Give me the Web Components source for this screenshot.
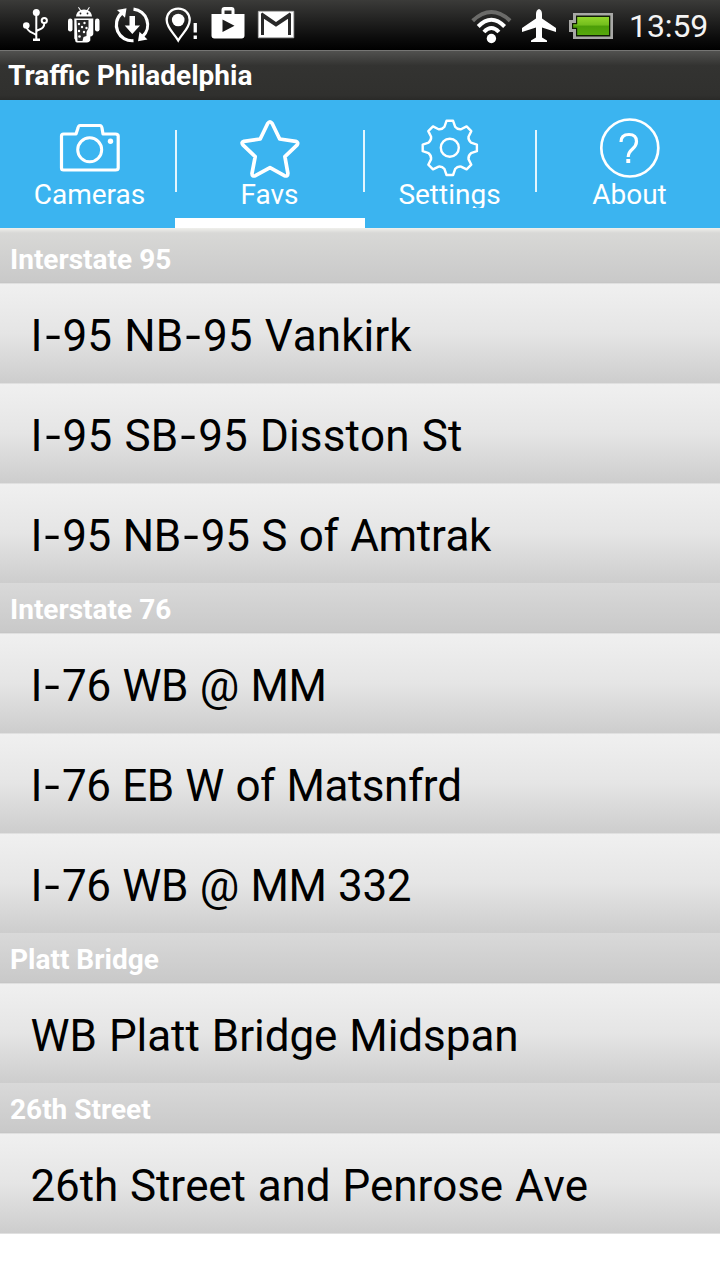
<!DOCTYPE html>
<html lang="en">
<head>
<meta charset="utf-8">
<title>Traffic Philadelphia</title>
<style>
html,body{margin:0;padding:0;background:#fff}
body{width:720px;height:1280px;overflow:hidden;font-family:Roboto,"Noto Sans",sans-serif}
</style>
</head>
<body>
<traffic-app></traffic-app>
<script>
const define = (name, html, after) => customElements.define(name, class extends HTMLElement {
  connectedCallback() {
    if (this.shadowRoot) return;
    const t = document.createElement('template');
    t.innerHTML = html;
    const root = this.attachShadow({mode: 'open'});
    root.append(t.content.cloneNode(true));
    if (after) after(this, root);
  }
});

define('status-bar', `
<style>
:host{display:flex;height:50px;box-sizing:border-box;background:linear-gradient(#3b3b39,#252524 35%,#0c0c0c 75%,#000);color:#f4f4f4}
svg{display:block;flex:none}
.left{width:460px}
span{font-size:32px;line-height:53px;letter-spacing:-.1px;margin-left:9px;white-space:nowrap}
</style>
<svg class="left" width="460" height="50" viewBox="0 0 460 50">
  <g fill="none" stroke="#fff" stroke-width="2">
    <path d="M36.3 13v27M36.3 35.500c-1-3-9.500-2-10-10M36.300 31.500c2-3 8-1 8-8.500"/>
    <circle cx="44.300" cy="20.500" r="2.600"/>
  </g>
  <g fill="#fff"><circle cx="36.300" cy="12.500" r="3.500"/><circle cx="26.300" cy="25.500" r="3.300"/><rect x="33" y="38.500" width="7" height="2.500"/></g>
  <g fill="#fff">
    <path d="M76 16.500c.3-3.500 2-5 4-6l-2-3 .8-.5 2.200 3q3-.8 6 0l2-3 .8.500-1.800 3c2 1 3.700 2.500 4 6z"/>
    <rect x="68" y="18.500" width="4.500" height="13" rx="2.200"/><rect x="95" y="18.500" width="4.500" height="13" rx="2.200"/>
    <path d="M74.300 18.500h19v15q0 2.500-3 3v4q-1.500 2.500-4 2H77q-2-.5-2-3l-.7-1z"/>
  </g>
  <path d="M76.500 20h12v8l-2 4v4l-3 1-1 4h-5z" fill="#292929"/>
  <g fill="#fff"><circle cx="80.500" cy="13.500" r=".9" fill="#222"/><circle cx="87.500" cy="13.500" r=".9" fill="#222"/>
  <circle cx="79" cy="24" r="1.200"/><circle cx="84.500" cy="23" r="1.200"/><circle cx="82" cy="27" r="1.200"/><circle cx="86.500" cy="28" r="1.200"/><circle cx="79" cy="31" r="1.200"/><circle cx="84" cy="32" r="1.200"/><circle cx="79.500" cy="36.500" r="1.300"/></g>
  <g fill="none" stroke="#fff" stroke-width="3.200">
    <path d="M133.500 9.100a15.800 15.800 0 0 1 9 27.400M133.500 40.700a15.800 15.800 0 0 1-12-27.400"/>
  </g>
  <path fill="#fff" d="M117 10l9.500-1.800-1.500 9.500zM147.500 39.500l-9.500 1.800 1.500-9.500zM129.500 16h5.500v9.500h5L132.300 34l-7.600-8.500h4.800z"/>
  <path d="M178.200 8.700c7 0 11.500 5 11.500 11.300 0 8-7.500 13.500-11.500 20.500C174.200 33.500 166.700 28 166.700 20c0-6.300 4.500-11.300 11.500-11.300z" fill="none" stroke="#fff" stroke-width="2.300"/>
  <circle cx="178.200" cy="20" r="6.300" fill="#fff"/><path fill="#fff" d="M193.600 23h3.300v9.500h-3.300zM193.600 35.500h3.300v3.500h-3.300z"/>
  <path fill="#fff" fill-rule="evenodd" d="M211.500 14h10V10q0-3 3-3h7q3 0 3 3v4h10v21.500q0 3-3 3h-27q-3 0-3-3zM224.500 14h7v-3.500h-7zM222.500 19.500v12.500l12-6.300z"/>
  <path fill="#fff" stroke="#aaa" stroke-width=".8" d="M258.300 11.300h35.500v26.500h-35.500z"/>
  <path d="M262.500 35V16l13.500 9 13.500-9v19" fill="none" stroke="#292929" stroke-width="3"/>
  <path d="M261.500 13.500l14.500 10 14.500-10" fill="none" stroke="#292929" stroke-width="2.500"/>
</svg>
<svg width="160" height="50" viewBox="460 0 160 50">
  <defs><linearGradient id="g" x2="0" y2="1"><stop stop-color="#91d52b"/><stop offset=".45" stop-color="#72bd1c"/><stop offset=".5" stop-color="#4c9d08"/><stop offset="1" stop-color="#56a90c"/></linearGradient></defs>
  <g fill="none" stroke-width="4"><path stroke="#6b6b69" d="M472.700 20.700q18.700-17.400 37.400 0"/><path stroke="#fff" d="M478.200 26.500q13.200-13.500 26.400 0M483.900 32q7.500-8 15 0"/></g><circle cx="491.400" cy="38.500" r="4.700" fill="#fff"/>
  <path fill="#fff" d="M539 9q3 1 3 5v4.500l14 9.500v4l-14-4.500v10l5 3v1.500h-16v-1.500l5-3v-10L522 32v-4l14-9.500V14q0-4 3-5z"/>
  <path fill="#a8a8a6" d="M573 13h40v26h-40v-7h-4V20h4z"/><path fill="#101c04" d="M576 15.600h34.300v20.800H576v-7.500h-4v-5.800h4z"/><path fill="url(#g)" d="M577.200 17h31.800v18h-31.800v-7.300h-4v-3.400h4z"/>
</svg>
<span>13:59</span>`);

define('title-bar', `
<style>
:host{display:block;height:50px;box-sizing:border-box;border-top:1px solid #767674;background:linear-gradient(#51514f,#333331 30%,#30302e 90%,#292927);padding-left:8px;color:#fff;font-weight:700;font-size:28px;line-height:50px;white-space:nowrap}
</style><slot></slot>`);

define('nav-tab', `
<style>
:host{display:flex;position:relative;flex-direction:column;align-items:center;box-sizing:border-box;height:128px;padding-top:17px;color:#fff}
:host([pad]){padding-left:5px}
:host([selected]){border-bottom:10px solid #fff}
:host([divider])::after{content:"";position:absolute;right:var(--edge,-2px);top:30px;width:2px;height:62px;background:#e4f5fd;z-index:1}
.label{font-size:28px;line-height:34px;margin-top:-1px;padding-right:1px;height:30px;overflow:hidden;white-space:nowrap}
::slotted(svg){display:block;width:64px;height:62px;flex:none}
</style><slot name="icon"></slot><div class="label"><slot></slot></div>`);

define('tab-strip', `
<style>
:host{display:grid;grid-template-columns:175px 190px 170px 185px;height:128px;background:#3bb4f0}
svg{fill:none;stroke:#fff;stroke-width:3;stroke-linejoin:round}
nav-tab[selected]{--edge:0px}
</style>
<nav-tab pad divider><svg slot="icon" viewBox="58 117 64 62"><path stroke-width="3.200" d="M63.500 134H76l2-6q.5-2.500 2-2.500h20q1.500 0 2 2.500l1 6h12.500q2.700 0 2.700 2v32q0 2-2.700 2h-52q-2 0-2-2v-32q0-2 2-2z"/><circle cx="89.700" cy="149.800" r="12"/><circle cx="110.500" cy="141.300" r="2.700" fill="#fff" stroke="none"/></svg>Cameras</nav-tab>
<nav-tab selected divider><svg slot="icon" viewBox="238 117 64 62"><path stroke-width="3.700" d="M267.700 123.500q2.300-3.500 4.500 0l7.500 15.500 16 2.300q3 1 1.500 3.500l-12.300 11.800 3 16.700q0 3.500-3.500 2.400L270 167.700l-14.600 8q-3.500 1.100-3.400-2.400l3.200-16.700-12.300-11.800q-2-2.500 1.100-3.500l16.200-2.300z"/></svg>Favs</nav-tab>
<nav-tab divider><svg slot="icon" viewBox="418 117 64 62"><path id="gear" stroke-width="2.400"/><circle cx="449.800" cy="147.800" r="9" stroke-width="2.400"/></svg>Settings</nav-tab>
<nav-tab pad><svg slot="icon" viewBox="598 117 64 62"><circle cx="629.800" cy="148" r="28.500" stroke-width="2.700"/><path stroke-width="3.200" d="M621 142q0-7.500 8-7.500 7.500 0 7.500 7 0 4-4 7.500-4.300 3.700-4.300 8"/><path fill="#fff" stroke="none" d="M626.300 159h3.900v4h-3.900z"/></svg>About</nav-tab>`,
(host, root) => {
  // Gear outline: eight flat-topped teeth separated by shallow rounded valleys.
  let d = '';
  const p = (r, a) => (449.8 + r * Math.sin(a * Math.PI / 180)).toFixed(1) + ' ' + (147.9 - r * Math.cos(a * Math.PI / 180)).toFixed(1);
  for (let i = 0; i < 8; i++) {
    const a = i * 45;
    d += (i ? 'L' : 'M') + p(27.3, a - 7) + 'L' + p(27.3, a + 7) + 'L' + p(21.8, a + 14) + 'Q' + p(19.8, a + 22.5) + ' ' + p(21.8, a + 31);
  }
  root.getElementById('gear').setAttribute('d', d + 'Z');
});

define('section-header', `
<style>
:host{display:block;height:50px;box-sizing:border-box;padding-left:10px;background:linear-gradient(#d9d9d9,#c9c9c9);border-bottom:1px solid #c6c6c6;color:#fff;font-weight:700;font-size:28px;line-height:54px;white-space:nowrap}
:host([first]){height:55px;background:linear-gradient(#f0f0ec,#d8d8d6 5px,#c9c9c9);padding-top:5px}
</style><slot></slot>`);

define('camera-row', `
<style>
:host{display:block;height:100px;box-sizing:border-box;padding-left:30.500px;background:linear-gradient(#f0f0f0,#e5e5e5 50%,#cdcdcd);border-top:1px solid #e0e0e0;color:#000;font-size:44px;line-height:104px;font-kerning:none;word-spacing:1.200px;white-space:nowrap}
#text{display:inline-block}
.dash{display:inline-block;width:20px;text-align:center;letter-spacing:0;transform:scaleX(1.250)}
</style><span id="text"></span>`,
(host, root) => {
  const text = root.getElementById('text');
  const name = host.getAttribute('name');
  name.split('-').forEach((part, i) => {
    if (i) {
      const dash = document.createElement('span');
      dash.className = 'dash';
      dash.textContent = '-';
      text.append(dash);
    }
    text.append(part);
  });
  const w = text.getBoundingClientRect().width;
  text.style.letterSpacing = (host.getAttribute('width') - w) / name.replace(/-/g, '').length + 'px';
});

define('traffic-app', `
<style>:host{display:flex;flex-direction:column;width:720px;height:1280px;background:#fff}main{display:flex;flex-direction:column;border-bottom:1px solid #e0e0e0}</style>
<status-bar></status-bar>
<title-bar>Traffic Philadelphia</title-bar>
<tab-strip></tab-strip>
<main>
<section-header first>Interstate 95</section-header>
<camera-row name="I-95 NB-95 Vankirk" width="381"></camera-row>
<camera-row name="I-95 SB-95 Disston St" width="432"></camera-row>
<camera-row name="I-95 NB-95 S of Amtrak" width="460.5"></camera-row>
<section-header>Interstate 76</section-header>
<camera-row name="I-76 WB @ MM" width="296"></camera-row>
<camera-row name="I-76 EB W of Matsnfrd" width="431"></camera-row>
<camera-row name="I-76 WB @ MM 332" width="380.5"></camera-row>
<section-header>Platt Bridge</section-header>
<camera-row name="WB Platt Bridge Midspan" width="488"></camera-row>
<section-header>26th Street</section-header>
<camera-row name="26th Street and Penrose Ave" width="557.5"></camera-row>
</main>`);
</script>
</body>
</html>
